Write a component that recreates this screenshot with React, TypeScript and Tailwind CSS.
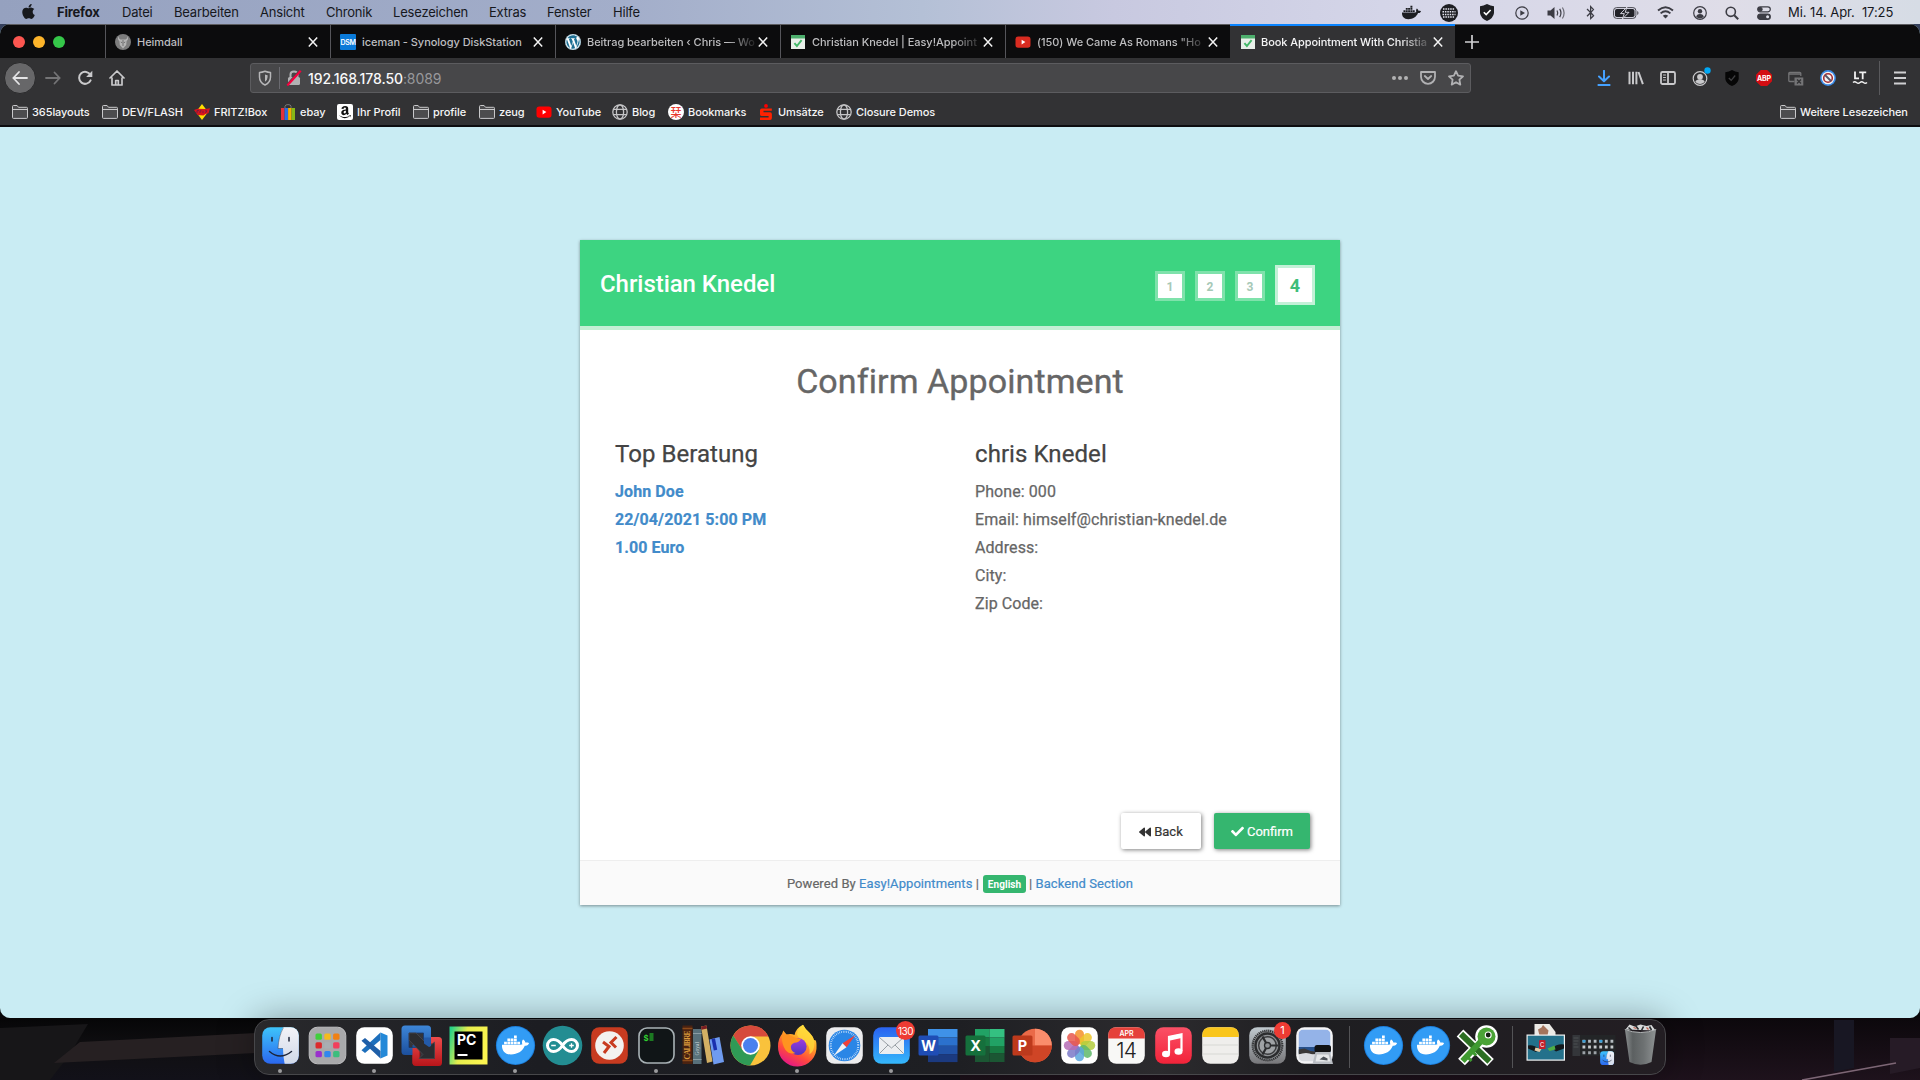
import React from "react";
import { FaApple, FaDocker, FaWordpress, FaAmazon, FaBluetoothB, FaCheck, FaBackward } from "react-icons/fa";

const UI = "font-['Inter','Liberation_Sans',sans-serif]";

/* ---------- small glyphs ---------- */

const Folder = () => (
  <svg width="16" height="16" viewBox="0 0 16 16" fill="none" stroke="#c8c8ca" strokeWidth="1">
    <path d="M.5 13.5v-11q0-1 1-1h3.6l1.4 1.8h8q1 0 1 1v9.2q0 .9-1 .9h-13q-1 0-1-.9z" fill="#4c4c4e" />
    <path d="M.8 5.5h14.4" />
  </svg>
);

const Globe = () => (
  <svg width="16" height="16" viewBox="0 0 16 16" fill="none" stroke="#c4c4c6" strokeWidth="1.3">
    <circle cx="8" cy="8" r="7.2" />
    <ellipse cx="8" cy="8" rx="3.6" ry="7.2" />
    <path d="M1.4 5.4h13.2M1.4 10.6h13.2" />
  </svg>
);

const YouTube = ({ color }: { color: string }) => (
  <svg width="16" height="16" viewBox="0 0 16 16">
    <rect x=".5" y="2.4" width="15" height="11.4" rx="2.8" fill={color} />
    <path d="M6.6 5.8v4.6l3.8-2.3z" fill="#fff" />
  </svg>
);

const Fritz = () => (
  <svg width="16" height="16" viewBox="0 0 16 16">
    <path d="M8 0l6 8-6 8-6-8z" fill="#ffe000" />
    <path d="M0 6l3.500-1.200 8 .2 4.500-.7-1.500 5-3 .7-2 1.500-6-.5-1-1.500z" fill="#d8141c" />
    <path d="M3 9V6.600h2M6 9V6.800h1.600M9 9V6.800M11 6.800h2L11.400 9" stroke="#6a1a48" strokeWidth=".9" fill="none" />
  </svg>
);

const Ebay = () => (
  <svg width="16" height="16" viewBox="0 0 16 16">
    <path d="M5 4V2.2Q5.2.6 8 .6t3 1.6V4" stroke="#777" fill="none" />
    <path d="M1 4h3.6v12H1z" fill="#e53238" />
    <path d="M4.6 4h3.5v12H4.6z" fill="#2a6fe0" />
    <path d="M8.1 4h3.5v12H8.1z" fill="#f5af02" />
    <path d="M11.6 4H15v12h-3.4z" fill="#86b817" />
  </svg>
);

const AmazonIcon = () => (
  <span className="flex size-4 items-center justify-center rounded-[2px] bg-white">
    <FaAmazon size={14} color="#111" />
  </span>
);

const JapanIcon = () => (
  <span className="flex size-4 items-center justify-center rounded-full bg-white font-['Noto_Sans_CJK_JP',sans-serif] text-[11px] leading-none text-[#e8372c]">栞</span>
);

const Sparkasse = () => (
  <svg width="16" height="16" viewBox="0 0 16 16">
    <circle cx="8" cy="1.9" r="1.9" fill="#f00" />
    <path d="M3.800 4.600h10v2.200H5.500v1.500H12q1.900 0 1.900 1.900v3.700q0 2-1.900 2H2v-2.300h8.600v-1.500H3.800Q2 12.100 2 10.200V6.400q0-1.800 1.800-1.800z" fill="#f20" />
  </svg>
);

const Heimdall = () => (
  <svg width="16" height="16" viewBox="0 0 16 16">
    <circle cx="8" cy="8" r="8" fill="#7d7d7d" />
    <path d="M4 2Q1.800 5 4.400 7l.4 4L8 14.500 11.200 11l.4-4Q14.200 5 12 2q.5 3-1.500 3.500h-5Q3.500 5 4 2z" fill="#b4b4b4" />
    <path d="M8 6v6M5.800 8l1.400.8M10.200 8l-1.400.8" stroke="#6a6a6a" strokeWidth=".9" />
  </svg>
);

const Dsm = () => (
  <span className="flex size-4 items-center justify-center rounded-[1px] bg-[#0a7ad8] text-[7px] leading-none font-semibold tracking-[-0.3px] text-white">DSM</span>
);

const WordPress = () => (
  <span className="flex size-4 items-center justify-center rounded-full bg-white">
    <FaWordpress size={16} color="#1d6f93" />
  </span>
);

const EasyAppt = () => (
  <svg width="16" height="16" viewBox="0 0 16 16">
    <path d="M1 1h14v14H1z" fill="#e8efe9" />
    <path d="M1 1h14v3.600H1z" fill="#4cae6c" />
    <path d="M4.400 9.200l2.500 2.800 4.700-5.800" stroke="#43b869" strokeWidth="1.900" fill="none" />
  </svg>
);

const Close = () => (
  <svg width="10" height="10" viewBox="0 0 10 10" className="shrink-0" stroke="#f2f2f2" strokeWidth="1.500">
    <path d="M.8.5l8.400 9M9.200.5l-8.400 9" />
  </svg>
);

/* ---------- macOS menu bar ---------- */

const menus: [string, string][] = [
  ["Datei", "w-[52px]"],
  ["Bearbeiten", "w-[86px]"],
  ["Ansicht", "w-[66px]"],
  ["Chronik", "w-[67px]"],
  ["Lesezeichen", "w-[96px]"],
  ["Extras", "w-[58px]"],
  ["Fenster", "w-[66px]"],
  ["Hilfe", "w-[40px]"],
];

function Slot({ w, children }: { w: string; children: React.ReactNode }) {
  return <span className={`flex h-full shrink-0 items-center justify-center ${w}`}>{children}</span>;
}

function MenuBar() {
  return (
    <div className="flex h-6 shrink-0 items-center bg-[linear-gradient(90deg,#95a1bf_0%,#a3aeca_33%,#b4c0d6_48%,#c8c9e0_58%,#d4d5e8_72%,#dfdde8_90%,#d6dce5_100%)] pt-px text-[13px] tracking-[-0.2px] text-[#16181d]">
      <span className="flex w-[57px] justify-center pb-[2px]">
        <FaApple size={17} color="#17191d" />
      </span>
      <span className="w-[65px] font-bold">Firefox</span>
      {menus.map(([label, w]) => (
        <span key={label} className={w}>
          {label}
        </span>
      ))}
      <div className="ml-auto flex h-full items-center">
        <Slot w="w-[38px]">
          <FaDocker size={19} color="#1d1e22" />
        </Slot>
        <Slot w="w-[38px]">
          <svg width="18" height="18" viewBox="0 0 18 18">
            <circle cx="9" cy="9" r="9" fill="#1d1e22" />
            <path d="M3 5h12M2.500 7.700h13M2.500 10.400h13M3 13.100h12" stroke="#e4e4ee" strokeWidth="1.500" strokeDasharray="1.500 .9" />
          </svg>
        </Slot>
        <Slot w="w-[37px]">
          <svg width="16" height="17" viewBox="0 0 16 17">
            <path d="M8 0q3.500 2 7 2.200V9q-.5 5-7 8Q1.500 14 1 9V2.200Q4.500 2 8 0z" fill="#1d1e22" />
            <path d="M4.800 8.200l2.400 2.400 4.400-4.600" stroke="#fff" strokeWidth="1.600" fill="none" />
          </svg>
        </Slot>
        <Slot w="w-[33px]">
          <svg width="14" height="14" viewBox="0 0 14 14">
            <circle cx="7" cy="7" r="6.200" stroke="#3c3c44" strokeWidth="1.200" fill="none" />
            <path d="M5.300 4.200v5.600L10 7z" fill="#3c3c44" />
          </svg>
        </Slot>
        <Slot w="w-[36px]">
          <svg width="19" height="14" viewBox="0 0 19 14" fill="none" stroke="#3c3c44" strokeWidth="1.200">
            <path d="M.5 4.600h3L7.500 1v12l-4-3.600h-3z" fill="#3c3c44" stroke="none" />
            <path d="M10 4.500q1.500 2.500 0 5M12.700 2.900q2.500 4.100 0 8.200" />
            <path d="M15.400 1.500q3.400 5.500 0 11" stroke="#6d6d76" />
          </svg>
        </Slot>
        <Slot w="w-[32px]">
          <FaBluetoothB size={15} color="#3c3c44" />
        </Slot>
        <Slot w="w-[40px]">
          <svg width="26" height="12" viewBox="0 0 26 12">
            <rect x=".6" y=".6" width="22.300" height="10.800" rx="3" fill="none" stroke="#4a4a52" />
            <rect x="2" y="2" width="19.500" height="8" rx="1.800" fill="#222228" />
            <path d="M24.200 4v4q1.300-.4 1.300-2t-1.300-2z" fill="#55555c" />
            <path d="M14 0L7.500 6.600h3.800L9.400 12 16 5.300h-3.800z" fill="#222228" stroke="#e0dfe9" strokeWidth=".9" />
          </svg>
        </Slot>
        <Slot w="w-[38px]">
          <svg width="17" height="13" viewBox="0 0 17 13" fill="none" stroke="#3c3c44" strokeWidth="1.900" className="ml-px">
            <path d="M1 4.500q7.500-6.600 15 0M3.600 7.400q4.900-4.200 9.800 0" />
            <path d="M8.500 12.500L5.800 9.800q2.700-2 5.400 0z" fill="#3c3c44" stroke="none" />
          </svg>
        </Slot>
        <Slot w="w-[32px]">
          <svg width="14" height="14" viewBox="0 0 14 14">
            <circle cx="7" cy="7" r="6.300" stroke="#3c3c44" strokeWidth="1.200" fill="none" />
            <circle cx="7" cy="5.200" r="2.200" fill="#3c3c44" />
            <path d="M3.200 11q.4-3 3.800-3t3.800 3q-3.800 2.800-7.600 0z" fill="#3c3c44" />
          </svg>
        </Slot>
        <Slot w="w-[32px]">
          <svg width="14" height="14" viewBox="0 0 14 14" fill="none" stroke="#3c3c44" strokeWidth="1.600">
            <circle cx="5.800" cy="5.800" r="4.600" />
            <path d="M9.200 9.200l4 4" strokeWidth="2" />
          </svg>
        </Slot>
        <Slot w="w-[32px]">
          <svg width="14" height="14" viewBox="0 0 14 14" fill="none" stroke="#3c3c44" strokeWidth="1.200">
            <rect x=".7" y=".8" width="12.600" height="5" rx="2.500" />
            <circle cx="3.300" cy="3.300" r="1.800" fill="#3c3c44" />
            <rect x=".7" y="8" width="12.600" height="5.400" rx="2.700" fill="#3c3c44" />
            <circle cx="10.600" cy="10.700" r="1.500" fill="#e0e0ea" stroke="none" />
          </svg>
        </Slot>
        <span className="ml-2 w-[132px] whitespace-pre tracking-[-0.08px]">{"Mi. 14. Apr.  17:25"}</span>
      </div>
    </div>
  );
}

/* ---------- browser chrome ---------- */

const tabs: { icon: React.ReactNode; title: string }[] = [
  { icon: <Heimdall />, title: "Heimdall" },
  { icon: <Dsm />, title: "iceman - Synology DiskStation" },
  { icon: <WordPress />, title: "Beitrag bearbeiten ‹ Chris — Wo" },
  { icon: <EasyAppt />, title: "Christian Knedel | Easy!Appoint" },
  { icon: <YouTube color="#d92b20" />, title: '(150) We Came As Romans "Ho' },
];

/* Titles that run up to the close button fade out at their right end. */
const FADE = "mask-[linear-gradient(90deg,#000_140px,transparent_172px)]";

function TabStrip() {
  return (
    <div className="flex h-[34px] shrink-0 border-t border-[#5d5d61] bg-[#0c0c0d]">
      <div className="flex w-[105px] shrink-0 items-center gap-2 pt-px pl-[13px]">
        <span className="size-3 rounded-full bg-[#fc5650]" />
        <span className="size-3 rounded-full bg-[#fdb42a]" />
        <span className="size-3 rounded-full bg-[#35c749]" />
      </div>
      {tabs.map((t, i) => (
        <div key={t.title} className="flex w-[225px] shrink-0 items-center border-l border-[#55555a] pt-px pr-[12px] pl-[9px]">
          <span className="shrink-0">{t.icon}</span>
          <span className={`mr-[1px] ml-[6px] w-[175px] text-[11px] font-medium tracking-[-0.04px] whitespace-nowrap text-[#bebec0] ${i > 1 ? FADE : ""}`}>
            {t.title}
          </span>
          <Close />
        </div>
      ))}
      <div className="-mt-px flex w-[225px] shrink-0 items-center border-t-2 border-[#0a84ff] bg-[#323234] pr-[12px] pl-[10px]">
        <span className="shrink-0">
          <EasyAppt />
        </span>
        <span className={`mr-[1px] ml-[5px] w-[175px] text-[11px] font-medium tracking-[-0.07px] whitespace-nowrap text-[#f5f5f6] ${FADE}`}>
          Book Appointment With Christia
        </span>
        <Close />
      </div>
      <div className="flex w-[34px] items-center justify-center">
        <svg width="14" height="14" viewBox="0 0 14 14" stroke="#d0d0d2" strokeWidth="1.700">
          <path d="M7 0v14M0 7h14" />
        </svg>
      </div>
    </div>
  );
}

const S = ({ children, c = "#c9c9cb", w = 1.8 }: { children: React.ReactNode; c?: string; w?: number }) => (
  <svg width="16" height="16" viewBox="0 0 16 16" fill="none" stroke={c} strokeWidth={w} strokeLinecap="round" strokeLinejoin="round">
    {children}
  </svg>
);

function NavBar() {
  return (
    <div className="flex h-10 shrink-0 items-center bg-[#323234] pl-1">
      <span className="flex size-8 items-center justify-center rounded-full border border-[#29292b] bg-[#676769]">
        <S c="#e4e4e6">
          <path d="M15 8H1.300M7 2L1.300 8 7 14" />
        </S>
      </span>
      <Slot w="w-[33px]">
        <S c="#747476">
          <path d="M1 8h13.700M9.500 2.500L14.700 8l-5.200 5.500" />
        </S>
      </Slot>
      <Slot w="w-[32px]">
        <S w={2}>
          <path d="M13.600 10.300A6 6 0 1 1 13.400 5" />
          <path d="M15.300.8v6.200H9.100z" fill="#c9c9cb" stroke="none" />
        </S>
      </Slot>
      <Slot w="w-[32px]">
        <S w={1.700}>
          <path d="M1 8l7-7 7 7M3 8v7h10V8M6.700 14.500v-4h2.600v4" />
        </S>
      </Slot>
      <div className="ml-[117px] flex h-[30px] w-[1221px] items-center rounded-[3px] border border-[#5c5c5f] bg-[#474749]">
        <Slot w="w-[28px]">
          <S c="#b6b6b8" w={1.500}>
            <path d="M8 1.300q3 1.200 5.500 1.200V7q0 5.500-5.500 8Q2.500 12.500 2.500 7V2.500Q5 2.500 8 1.300z" />
            <path d="M8 4.500q1.500.6 2.600.7V7q0 3-2.600 4.700z" fill="#b6b6b8" stroke="none" />
          </S>
        </Slot>
        <span className="h-[22px] w-px bg-[#6a6a70]" />
        <Slot w="w-[28px]">
          <svg width="16" height="16" viewBox="0 0 16 16" fill="none">
            <rect x="2" y="7" width="12" height="8" rx="1.500" fill="#b1b1b3" />
            <path d="M4.500 7V4.500q0-3 3.500-3t3.500 3V7" stroke="#b1b1b3" strokeWidth="2" />
            <path d="M1.500 14L13 1" stroke="#474749" strokeWidth="1.600" />
            <path d="M1.300 15.500L14.700.8" stroke="#f5003d" strokeWidth="2.200" />
          </svg>
        </Slot>
        <span className="pt-px text-[14px] font-medium tracking-[-0.1px] text-[#f9f9fa]">
          192.168.178.50<span className="font-normal text-[#98989b]">:8089</span>
        </span>
        <div className="ml-auto flex h-full">
          <Slot w="w-[28px]">
            <svg width="16" height="4" viewBox="0 0 16 4" fill="#b1b1b3">
              <circle cx="2" cy="2" r="2" />
              <circle cx="8" cy="2" r="2" />
              <circle cx="14" cy="2" r="2" />
            </svg>
          </Slot>
          <Slot w="w-[28px]">
            <S c="#b1b1b3">
              <path d="M1 2h14v4.800a7 7 0 0 1-14 0zM4.800 6L8 9l3.200-3" />
            </S>
          </Slot>
          <Slot w="w-[28px]">
            <S c="#b1b1b3">
              <path d="M8 1.200l2.100 4.500 4.900.6-3.600 3.400.9 4.900L8 12.200l-4.300 2.400.9-4.900L1 6.300l4.900-.6z" />
            </S>
          </Slot>
        </div>
      </div>
      <div className="ml-auto flex h-full items-center">
        <Slot w="w-[32px]">
          <S c="#45a1ff" w={2}>
            <path d="M8 .8v10M3 6.500l5 4.700 5-4.700M2.400 15h11.200" />
          </S>
        </Slot>
        <Slot w="w-[32px]">
          <S w={2}>
            <path d="M1.500 1.800v12.400M5 1.800v12.400M8.400 1.800v12.400M10.500 2l4.400 12.200" strokeLinecap="butt" />
          </S>
        </Slot>
        <Slot w="w-[32px]">
          <S>
            <rect x="1" y="2" width="14" height="12" rx="1.500" />
            <path d="M8 2v12" />
            <path d="M3.500 5h2M3.500 7.500h2M3.500 10h2" strokeWidth="1" />
          </S>
        </Slot>
        <Slot w="w-[32px]">
          <svg width="20" height="20" viewBox="0 0 20 20" className="-mt-0.5 ml-0.5" fill="none">
            <circle cx="9" cy="11.500" r="6.800" stroke="#c9c9cb" strokeWidth="1.200" />
            <circle cx="9" cy="9.800" r="2.900" fill="#c9c9cb" />
            <path d="M4.300 15q.8-2.700 4.700-2.700t4.700 2.700Q9 19 4.300 15z" fill="#c9c9cb" />
            <circle cx="16.500" cy="3.500" r="3.200" fill="#00a8f5" />
          </svg>
        </Slot>
        <Slot w="w-[32px]">
          <svg width="16" height="16" viewBox="0 0 16 16">
            <path d="M8 0q3 1.900 6.700 2.200V9Q14 13.500 8 16 2 13.500 1.300 9V2.200Q5 1.900 8 0z" fill="#060606" />
            <path d="M4.800 8l2.400 2.300 4-4.800" stroke="#3e3e40" strokeWidth="1.300" fill="none" />
          </svg>
        </Slot>
        <Slot w="w-[32px]">
          <span className="flex size-4 items-center justify-center bg-[#d40d12] [clip-path:polygon(30%_0,70%_0,100%_30%,100%_70%,70%_100%,30%_100%,0_70%,0_30%)]">
            <b className="text-[7px] leading-none tracking-[-0.2px] text-white">ABP</b>
          </span>
        </Slot>
        <Slot w="w-[32px]">
          <svg width="16" height="16" viewBox="0 0 16 16" fill="none" stroke="#747476" strokeWidth="1.300">
            <path d="M6.500 11.500H1.800q-1 0-1-1V3.300q0-1 1-1h10q1 0 1 1V6M1 4h11.500" />
            <rect x="6.500" y="7.500" width="8.800" height="8" fill="#747476" stroke="none" />
            <path d="M9 9.500l4 4M13 9.500l-4 4" stroke="#323234" />
          </svg>
        </Slot>
        <Slot w="w-[32px]">
          <svg width="16" height="16" viewBox="0 0 16 16" fill="none">
            <circle cx="8" cy="8" r="7.900" fill="#3b8be8" />
            <circle cx="8" cy="8" r="6.300" fill="#f4f4f4" />
            <circle cx="8" cy="8" r="4.300" stroke="#a52f35" strokeWidth="1.600" />
            <path d="M5 5l6 6" stroke="#55576a" strokeWidth="1.800" />
          </svg>
        </Slot>
        <Slot w="w-[32px]">
          <svg width="16" height="16" viewBox="0 0 16 16" fill="none" stroke="#f2f2f2" strokeWidth="1.800">
            <path d="M3 1.500v6.800h4M7.200 2.400h7M10.700 2.400v6.900" />
            <path d="M1 12.500q1.700-1.500 3.500 0t3.500 0 3.500 0 3.500 0" strokeWidth="1.500" />
          </svg>
        </Slot>
        <span className="ml-[3px] h-[34px] w-px bg-[#59595c]" />
        <Slot w="w-[40px]">
          <svg width="14" height="14" viewBox="0 0 14 14" stroke="#d0d0d2" strokeWidth="1.800">
            <path d="M1 1.500h12M1 7h12M1 12.500h12" />
          </svg>
        </Slot>
      </div>
    </div>
  );
}

const bookmarks: { icon: React.ReactNode; label: string; w: string }[] = [
  { icon: <Folder />, label: "365layouts", w: "w-[90px]" },
  { icon: <Folder />, label: "DEV/FLASH", w: "w-[92px]" },
  { icon: <Fritz />, label: "FRITZ!Box", w: "w-[86px]" },
  { icon: <Ebay />, label: "ebay", w: "w-[57px]" },
  { icon: <AmazonIcon />, label: "Ihr Profil", w: "w-[76px]" },
  { icon: <Folder />, label: "profile", w: "w-[66px]" },
  { icon: <Folder />, label: "zeug", w: "w-[57px]" },
  { icon: <YouTube color="#f00" />, label: "YouTube", w: "w-[76px]" },
  { icon: <Globe />, label: "Blog", w: "w-[56px]" },
  { icon: <JapanIcon />, label: "Bookmarks", w: "w-[90px]" },
  { icon: <Sparkasse />, label: "Umsätze", w: "w-[78px]" },
  { icon: <Globe />, label: "Closure Demos", w: "w-[110px]" },
];

function BookmarkBar() {
  return (
    <div className="flex h-[29px] shrink-0 items-center border-b-2 border-[#0d0d10] bg-[#323234] pt-px pl-3 text-[11px] font-medium tracking-[-0.08px] text-[#f5f5f6]">
      {bookmarks.map((b) => (
        <span key={b.label} className={`flex shrink-0 items-center gap-1 whitespace-nowrap ${b.w}`}>
          {b.icon}
          {b.label}
        </span>
      ))}
      <span className="ml-auto flex w-[140px] items-center gap-1 whitespace-nowrap">
        <Folder />
        Weitere Lesezeichen
      </span>
    </div>
  );
}

/* ---------- booking page ---------- */

function Step({ n }: { n: string }) {
  return (
    <span className="flex size-[30px] items-center justify-center border-3 border-[#7fe2ab] bg-white pt-px text-[12px] font-bold text-[#a6c8b6]">{n}</span>
  );
}

function BookingCard() {
  return (
    <div className="flex h-[665px] w-[760px] flex-col bg-white font-['Roboto',sans-serif] shadow-[0_1px_3px_rgba(0,0,0,0.4)]">
      <div className="flex h-[90px] shrink-0 items-center border-b-4 border-[#c3efd5] bg-[#3dd481] pr-[25px] pl-5">
        <span className="pt-[2px] text-[24px] font-medium tracking-[-0.05px] text-white">Christian Knedel</span>
        <div className="mt-1 ml-auto flex items-center gap-2.5">
          <div className="mt-[2px] flex gap-2.5">
            <Step n="1" />
            <Step n="2" />
            <Step n="3" />
          </div>
          <span className="flex size-10 items-center justify-center border-3 border-[#c3f1d7] bg-white text-[18px] font-bold text-[#3fbd79]">4</span>
        </div>
      </div>
      <h2 className="mt-[31px] text-center text-[34px] leading-[40px] tracking-[0.1px] text-[#666] [-webkit-text-stroke:0.35px_#666]">Confirm Appointment</h2>
      <div className="mt-[38px] flex pl-[35px]">
        <div className="w-[360px]">
          <h3 className="text-[24px] leading-[30px] tracking-[0.05px] text-[#444] [-webkit-text-stroke:0.25px_#444]">Top Beratung</h3>
          <div className="mt-[9px] text-[16px] leading-[28px] font-bold tracking-[0.09px] text-[#428bca] [-webkit-text-stroke:0.2px_#428bca]">
            <p>John Doe</p>
            <p>22/04/2021 5:00 PM</p>
            <p>1.00 Euro</p>
          </div>
        </div>
        <div>
          <h3 className="text-[24px] leading-[30px] tracking-[0.07px] text-[#444] [-webkit-text-stroke:0.25px_#444]">chris Knedel</h3>
          <div className="mt-[9px] text-[16px] leading-[28px] tracking-[0.08px] text-[#666] [-webkit-text-stroke:0.25px_#666]">
            <p>Phone: 000</p>
            <p>Email: himself@christian-knedel.de</p>
            <p>Address:</p>
            <p>City:</p>
            <p>Zip Code:</p>
          </div>
        </div>
      </div>
      <div className="mt-auto mb-[11px] flex justify-end gap-[13px] pr-[30px] text-[13px]">
        <button className="flex h-9 w-20 items-center justify-center gap-[3px] rounded-[2px] bg-white pt-px text-[#333] shadow-[1px_1px_4px_rgba(0,0,0,0.5)] [-webkit-text-stroke:0.2px_#333]">
          <FaBackward size={12} />
          Back
        </button>
        <button className="flex h-9 w-24 items-center justify-center gap-[3px] rounded-[2px] bg-[#35b66f] pt-px text-white shadow-[1px_1px_4px_rgba(0,0,0,0.5)] [-webkit-text-stroke:0.2px_#fff]">
          <FaCheck size={13} />
          Confirm
        </button>
      </div>
      <div className="flex h-[45px] shrink-0 items-center justify-center gap-1 border-t border-[#eee] bg-[#fafafa] pt-[2px] text-[13px] tracking-[0.07px] text-[#666]">
        <span className="[-webkit-text-stroke:0.2px_currentColor]">
          Powered By <span className="text-[#428bca]">Easy!Appointments</span> |
        </span>
        <span className="flex h-[18px] w-[43px] items-center justify-center rounded-[3px] bg-[#35b66f] pt-px text-[10px] font-bold text-white">English</span>
        <span className="-ml-px [-webkit-text-stroke:0.2px_currentColor]">
          | <span className="text-[#428bca]">Backend Section</span>
        </span>
      </div>
    </div>
  );
}

/* ---------- dock ---------- */

const D = ({ children }: { children: React.ReactNode }) => (
  <svg width="40" height="40" viewBox="-0.5 -0.5 40 40" className="overflow-visible">
    {children}
  </svg>
);

const Tile = ({ fill, stroke }: { fill: string; stroke?: string }) => (
  <rect x="1.700" y="1.700" width="36.600" height="36.600" rx="8.200" fill={fill} stroke={stroke} />
);

const Grad = ({ id, a, b, h }: { id: string; a: string; b: string; h?: boolean }) => (
  <linearGradient id={id} x1="0" y1="0" x2={h ? "1" : "0"} y2="1">
    <stop offset="0" stopColor={a} />
    <stop offset="1" stopColor={b} />
  </linearGradient>
);

const FinderFace = ({ id }: { id: string }) => (
  <>
    <defs>
      <Grad id={`${id}a`} a="#3ec8fb" b="#2a63ee" />
      <Grad id={`${id}b`} a="#f4f4f8" b="#cfd8e8" />
      <clipPath id={`${id}c`}>
        <rect x="1.700" y="1.700" width="36.600" height="36.600" rx="8.200" />
      </clipPath>
    </defs>
    <g clipPath={`url(#${id}c)`}>
      <path d="M0 0h40v40H0z" fill={`url(#${id}a)`} />
      <path d="M23.500 0Q18 10 17.500 23h5q0 9 2 17H40V0z" fill={`url(#${id}b)`} />
    </g>
    <path d="M11.500 12v3.500M28.500 12v3.500M9 26q10.500 9 22 0" stroke="#1c2438" strokeWidth="1.500" fill="none" strokeLinecap="round" />
    <path d="M23 2Q18 11 17.500 23h5" stroke="#1c2438" strokeWidth=".4" fill="none" />
  </>
);

const Finder = () => (
  <D>
    <FinderFace id="fnd" />
  </D>
);

const Launchpad = () => {
  const colors = ["#41cf3b", "#f5bb1d", "#f08013", "#dc2a2c", "#a9aeb2", "#f23f5c", "#9a30cc", "#3187ee", "#3cbd7d"];
  return (
    <D>
      <Tile fill="#a9a9ab" stroke="#bfbfc1" />
      {colors.map((c, i) => (
        <rect key={c} x={8 + (i % 3) * 8.8} y={8 + Math.floor(i / 3) * 8.8} width="6.400" height="6.200" rx="1.500" fill={c} />
      ))}
    </D>
  );
};

const VsCode = () => (
  <D>
    <Tile fill="#fff" />
    <path d="M26 7l7 3v20l-7 3z" fill="#2489d8" />
    <path d="M26 7v7.500L10.500 27.500 7 24.800z" fill="#1d6fbc" />
    <path d="M26 33v-7.500L10.500 12.500 7 15.200z" fill="#1f5fa8" />
  </D>
);

const VmWare = () => (
  <D>
    <defs>
      <Grad id="vmr" a="#ee4b4b" b="#b8151a" />
      <Grad id="vmb" a="#3d86d8" b="#1c4f9c" />
      <clipPath id="vmc">
        <path d="M0 22.500h22L40 40H0z" />
      </clipPath>
    </defs>
    <rect x="11" y="11.500" width="29.500" height="29" rx="3.500" fill="url(#vmr)" />
    <rect x="0" y="0" width="29.500" height="29.500" rx="3.500" fill="url(#vmb)" />
    <path d="M7.500 7.500H22v14.500H7.500z" fill="#33343a" stroke="#17386e" strokeWidth=".8" />
    <rect x="11" y="11.500" width="29.500" height="29" rx="3.500" fill="url(#vmr)" clipPath="url(#vmc)" />
    <path d="M18.500 21.500L26 18.500h7V33H18.500z" fill="#33343a" stroke="#6e1014" strokeWidth=".8" />
    <path d="M11 20l4.500-4.500 6.500 6.500H11z" fill="#1e529f" />
    <path d="M7.500 7.500h7L28 21l5-4.500V33H17.500l4-4L7.500 14.500z" fill="#2b2c30" stroke="#4b4c52" strokeWidth=".7" />
    <path d="M22.500 12v6l5 3.500 2-1V12z" fill="#235aa9" />
  </D>
);

const PyCharm = () => (
  <D>
    <defs>
      <linearGradient id="pyc" x1="0" y1=".2" x2="1" y2=".5">
        <stop offset="0" stopColor="#27d387" />
        <stop offset=".4" stopColor="#e6ed4d" />
        <stop offset="1" stopColor="#fcf550" />
      </linearGradient>
    </defs>
    <path d="M1 1h38v38H1z" fill="url(#pyc)" />
    <path d="M6 6h28v28H6z" fill="#000" />
    <text x="8.500" y="19.500" fill="#fff" fontFamily="Inter" fontWeight="700" fontSize="14">
      PC
    </text>
    <path d="M9 29.500h10" stroke="#fff" strokeWidth="2" />
  </D>
);

const Docker = () => (
  <D>
    <circle cx="20" cy="20" r="19.600" fill="#1c7fdc" />
    <circle cx="20" cy="20" r="18.600" fill="#329cf5" />
    <FaDocker x="6.500" y="6" size={27} color="#fff" />
  </D>
);

const Arduino = () => (
  <D>
    <circle cx="20" cy="20" r="19.800" fill="#238d92" />
    <path d="M20 20q-4-6-9-6a6 6 0 0 0 0 12q5 0 9-6 4-6 9-6a6 6 0 0 1 0 12q-5 0-9-6z" fill="none" stroke="#fff" strokeWidth="3" />
    <path d="M8.700 20h4.600M26.700 20h4.600M29 17.700v4.600" stroke="#fff" strokeWidth="1.300" />
  </D>
);

const RemoteDesktop = () => (
  <D>
    <Tile fill="#c83b20" />
    <circle cx="20" cy="20" r="14.300" fill="#f3f1ef" />
    <path d="M13.500 16.500l6 4.500-5 6.500M27 11.500l-5.500 5.500 5 5" stroke="#c83b20" strokeWidth="3" fill="none" />
  </D>
);

const Terminal = () => (
  <D>
    <rect x="2.500" y="2.500" width="35" height="35" rx="8" fill="#101517" stroke="#a9b2b6" strokeWidth="1.600" />
    <text x="7" y="15.500" fill="#31d631" fontFamily="Liberation Mono" fontWeight="700" fontSize="8.500">
      $
    </text>
    <path d="M13 7.500h4v8h-4z" fill="#1c7a22" />
  </D>
);

const Calibre = () => (
  <D>
    <path d="M-1 0h10v38.500H-1z" fill="#4a2210" />
    <path d="M-1 3h10M-1 35h10" stroke="#8a4a1a" strokeWidth="1.500" />
    <text x="0" y="0" transform="translate(6.300 34) rotate(-90)" fill="#d99a3c" fontFamily="Liberation Serif" fontWeight="700" fontSize="7.500" textLength="29">
      CALIBRE
    </text>
    <path d="M9.500 3.500h8.500v35H9.500z" fill="#58707a" />
    <path d="M9.500 8h8.500M9.500 34h8.500" stroke="#8a9ca3" />
    <text transform="translate(15.500 30) rotate(-90)" fill="#cfd8dc" fontFamily="Liberation Serif" fontSize="5.500">
      Goyal
    </text>
    <path d="M17.500 1l5.500-1 6 36-5.500 1.500z" fill="#d3b064" />
    <path d="M17.500 1l5.500-1 .6 3-5.600 1.200z" fill="#7a1d22" />
    <path d="M26 14l10-2.500 4.500 25L30 39z" fill="#6f9bf0" />
    <path d="M28 13.500l3.500-.8 2.200 11.500-3.400.8z" fill="#1a2fae" />
  </D>
);

const Chrome = () => (
  <D>
    <circle cx="20" cy="20" r="20" fill="#f9c23c" />
    <path d="M20 11h18A20 20 0 0 0 2.700 10l9 14.500z" fill="#d64a3c" />
    <path d="M2.700 10A20 20 0 0 0 19.500 40L28.500 24.500 20 29 12 24.500z" fill="#2f9a56" />
    <circle cx="20" cy="20" r="9.300" fill="#fff" />
    <circle cx="20" cy="20" r="7.500" fill="#4a80ee" />
  </D>
);

const Firefox = () => (
  <D>
    <defs>
      <linearGradient id="ffx" x1=".8" y1="0" x2=".3" y2="1">
        <stop offset="0" stopColor="#fff14a" />
        <stop offset=".4" stopColor="#ffa125" />
        <stop offset=".7" stopColor="#ff4a3c" />
        <stop offset="1" stopColor="#e3158a" />
      </linearGradient>
      <Grad id="ffp" a="#a33be0" b="#4f35c0" />
    </defs>
    <path d="M25.500-.8q2 4 6 7.500 4.500 4.500 5 8 2.500-1 2.500 5.300A19.300 19.300 0 1 1 .5 21Q.5 13 4.500 8.500L5.800 5 9 9q5-1 8 .5 1-6.500 8.500-10.300z" fill="url(#ffx)" />
    <path d="M25.500-.8q2 4 6 7.500 7 7 5 15-1 5-4.500 7 1-10-6-13-6-4-6.500-7 1-6 6-9.500z" fill="#ffd83a" opacity=".8" />
    <circle cx="20.500" cy="21" r="8.600" fill="url(#ffp)" />
    <path d="M4 10q6-2.500 13 2 3 .5 6.500 1.500-2 3.500-6.500 3.800-4.500 2-3.500 5.200.5 3.500 4.500 5-6 2-10-3-3.500-5-4-14.500z" fill="#ff9320" />
  </D>
);

const Safari = () => (
  <D>
    <Tile fill="#ececee" />
    <circle cx="20" cy="20" r="15.800" fill="#2a86e6" />
    <circle cx="20" cy="20" r="13.800" fill="none" stroke="#e6f2ff" strokeWidth="2" strokeDasharray=".6 1.200" />
    <path d="M31 9.500L18 17.700l4 4z" fill="#f0413a" />
    <path d="M9 30.500l9-12.800 4 4z" fill="#f2f2f4" />
  </D>
);

const Badge = ({ n, wide }: { n: string; wide?: boolean }) => (
  <span
    className={`absolute flex items-center justify-center rounded-full bg-[#ee3b33] leading-none text-white ${
      wide ? "-top-[4px] -right-[4px] size-[19px] text-[10px] tracking-[-0.5px]" : "-top-[3px] -right-[4px] size-[17px] text-[11px]"
    }`}
  >
    {n}
  </span>
);

const Mail = () => (
  <span className="relative">
    <D>
      <defs>
        <Grad id="mail" a="#2a62f0" b="#35b8fb" />
      </defs>
      <Tile fill="url(#mail)" />
      <rect x="7.500" y="11.500" width="25" height="17" rx="1.500" fill="#eceef0" />
      <path d="M8 12l12 10.500L32 12M8 28l8.500-8.500M32 28l-8.500-8.500" stroke="#8e959b" strokeWidth=".9" fill="none" />
    </D>
    <Badge n="130" wide />
  </span>
);

const Office = ({ letter, c }: { letter: string; c: string[] }) => (
  <D>
    {letter === "P" ? (
      <>
        <circle cx="22.500" cy="20" r="16.800" fill={c[1]} />
        <path d="M22.500 3.200A16.800 16.800 0 0 1 39.300 20H22.500z" fill={c[0]} />
        <path d="M5.700 20h33.600a16.800 16.800 0 0 1-33.600 0z" fill={c[2]} />
      </>
    ) : letter === "X" ? (
      <>
        <path d="M9.500 3.500H24V12H9.500z" fill="#21a265" />
        <path d="M24 3.500h15V12H24z" fill={c[0]} />
        <path d="M9.500 12H24v8.500H9.500z" fill="#177a42" />
        <path d="M24 12h15v8.500H24z" fill={c[1]} />
        <path d="M9.500 20.500H24v16H9.500z" fill={c[3]} />
        <path d="M24 20.500h15V28H24z" fill={c[2]} />
        <path d="M24 28h15v8.500H24z" fill={c[3]} />
      </>
    ) : (
      <>
        <path d="M9.500 3.500H39V12H9.500z" fill={c[0]} />
        <path d="M9.500 12H39v8.300H9.500z" fill={c[1]} />
        <path d="M9.500 20.300H39v8.300H9.500z" fill={c[2]} />
        <path d="M9.500 28.600H39v8H9.500z" fill={c[3]} />
      </>
    )}
    <rect x="0" y="10" width="20" height="20" rx="1.500" fill={c[4]} />
    <text x="10" y="25.200" textAnchor="middle" fill="#fff" fontFamily="Inter" fontWeight="700" fontSize="14.500">
      {letter}
    </text>
  </D>
);

const Photos = () => {
  const petals = ["#f5912a", "#edc52c", "#b3cc3d", "#5fb96a", "#5aa6dd", "#7a79c8", "#b56bb5", "#e8574c"];
  return (
    <D>
      <Tile fill="#fff" />
      {petals.map((c, i) => (
        <rect key={c} x="15.500" y="4.300" width="9" height="14.500" rx="4.500" fill={c} opacity=".85" transform={`rotate(${i * 45} 20 20)`} />
      ))}
    </D>
  );
};

const Calendar = () => (
  <D>
    <Tile fill="#f8f8f6" />
    <path d="M1.700 13V10q0-8.300 8.200-8.300h20.200q8.200 0 8.200 8.300v3z" fill="#e5413a" />
    <text x="20" y="10.500" textAnchor="middle" fill="#fff" fontFamily="Inter" fontWeight="600" fontSize="7">
      APR
    </text>
    <text x="19.700" y="32" textAnchor="middle" fill="#222" fontFamily="Inter" fontWeight="300" fontSize="21" letterSpacing="-.8">
      14
    </text>
  </D>
);

const Music = () => (
  <D>
    <defs>
      <Grad id="mus" a="#fb5066" b="#f22339" />
    </defs>
    <Tile fill="url(#mus)" />
    <path d="M15.500 28V11.500L28 8.800v16.700" stroke="#fff" strokeWidth="2.200" fill="none" />
    <path d="M15.500 11l12.500-2.800v4.300l-12.500 2.700z" fill="#fff" />
    <ellipse cx="12.500" cy="28.500" rx="4" ry="3.300" fill="#fff" />
    <ellipse cx="25" cy="26" rx="4" ry="3.300" fill="#fff" />
  </D>
);

const Notes = () => (
  <D>
    <Tile fill="#efeeec" />
    <path d="M1.700 11.500V10q0-8.300 8.200-8.300h20.200q8.200 0 8.200 8.300v1.500z" fill="#f9c51c" />
    <path d="M2 19.500h36M2 28.500h36" stroke="#cfcecb" strokeWidth=".7" />
  </D>
);

const Settings = () => (
  <span className="relative">
    <D>
      <defs>
        <Grad id="set" a="#c0c9cf" b="#77777a" />
      </defs>
      <Tile fill="url(#set)" />
      <circle cx="20" cy="20" r="14.800" fill="#8e9194" stroke="#2b2c2e" strokeWidth="2.200" strokeDasharray="1.200 .8" />
      <circle cx="20" cy="20" r="12" fill="none" stroke="#2b2c2e" strokeWidth="2.500" />
      <circle cx="20" cy="20" r="8.800" fill="#9fa2a5" stroke="#3a3b3d" strokeWidth="1.500" />
      <path d="M20 20L15 11M20 20h11M20 20l-5 9" stroke="#2b2c2e" strokeWidth="2.200" />
      <circle cx="20" cy="20" r="3" fill="#8e9194" stroke="#2b2c2e" strokeWidth="1.300" />
    </D>
    <Badge n="1" />
  </span>
);

const Preview = () => (
  <D>
    <Tile fill="#f4f4f6" />
    <clipPath id="pvw">
      <rect x="4" y="4" width="32" height="32" rx="5" />
    </clipPath>
    <g clipPath="url(#pvw)">
      <path d="M4 4h32v18H4z" fill="#94b3e8" />
      <path d="M4 21.500h32V28H4z" fill="#26508c" />
      <path d="M4 24l6-1 6 2.500 5 .5v3H4z" fill="#3a3838" />
      <path d="M4 29q8-3 14 0l18-1v8H4z" fill="#d9dbe0" />
    </g>
    <rect x="20" y="19.500" width="16.500" height="7.500" rx="2.500" fill="#111214" />
    <path d="M21 26.500h14.500l3 12H18z" fill="#b9bdc3" />
    <path d="M22.500 29h11.500l2 7H21z" fill="#e6e8ea" />
    <path d="M25 34l4-3 4 2v2z" fill="#4c5158" />
  </D>
);

const KeyCross = () => (
  <D>
    <g fill="none" stroke="#fff" strokeWidth="9.500">
      <path d="M2.500 7.500L33 37" />
      <path d="M4 36.500L27 13" />
    </g>
    <circle cx="29" cy="11" r="11.300" fill="#fff" />
    <path d="M3.500 8.500L32 36" stroke="#2c6e22" strokeWidth="6" />
    <path d="M5 35.500L27 12" stroke="#3f9a30" strokeWidth="6" />
    <path d="M10 31.500l4 4M15 26l3.500 4" stroke="#3f9a30" strokeWidth="3" />
    <circle cx="29" cy="11" r="9" fill="#4ba336" />
    <circle cx="30.700" cy="9.500" r="3.500" fill="#fff" />
    <circle cx="30.700" cy="9.500" r="2.400" fill="#14230f" />
  </D>
);

const MinWindow = () => (
  <D>
    <path d="M8-1.500h15l6 8v5H8z" fill="#eceae6" />
    <path d="M13 10l-1.500-6 3.500-2 1.500-2.500L19 2l3 3-1 5z" fill="#a5745c" />
    <rect x=".6" y="9.600" width="37.300" height="25" fill="#24718b" stroke="#f2f2f2" strokeWidth="1.200" />
    <path d="M1.500 20q6-1 11 3.500l-3 3-8-3.500zM37.500 19q-7-1-12 4l4 3 8-3z" fill="#14191c" />
    <path d="M9 22l6 1.500-2 3-5-1.500z" fill="#e5cba5" />
    <path d="M21 23l7-3 1 4-6 1.500z" fill="#4fae45" />
    <rect x="12.500" y="14.500" width="6.500" height="9" rx="1" fill="#c21f2b" />
    <text x="15.800" y="21.500" textAnchor="middle" fill="#fff" fontFamily="Inter" fontSize="6">
      C
    </text>
  </D>
);

const MinFinder = () => (
  <D>
    <rect x="-1" y="9.500" width="43" height="21" fill="#232527" />
    <rect x="-1" y="9.500" width="7.500" height="21" fill="#34363a" />
    <path d="M0 12.500h5M0 15.500h5M0 18.500h4M0 21.500h5" stroke="#5a5c60" strokeWidth=".7" />
    <g strokeWidth="3" strokeDasharray="2.800 2.800">
      <path d="M9 15.800h31" stroke="#b4babf" />
      <path d="M9 21.500h31" stroke="#c6cacd" />
      <path d="M9 27.200h17" stroke="#9ca2a7" />
    </g>
    <path d="M26 14.600h3v2.400h-3zM9 14.600h3v2.400H9z" fill="#3a9fd8" />
    <g transform="translate(26 25) scale(.38)">
      <FinderFace id="mf" />
    </g>
  </D>
);

const Trash = () => (
  <D>
    <defs>
      <linearGradient id="trs">
        <stop offset="0" stopColor="#8b8f90" />
        <stop offset=".25" stopColor="#5c6061" />
        <stop offset=".6" stopColor="#6d7172" />
        <stop offset="1" stopColor="#8e9293" />
      </linearGradient>
    </defs>
    <path d="M5 4L9-1l5 2 6-2 6 1.500 5-1L35 5z" fill="#d8dadb" />
    <path d="M8 2l3 2.500M15 0l3 4M23 1l-2 4M29 1l2 3.500" stroke="#2a2d30" strokeWidth="1.600" />
    <path d="M13 2l3 1M26 2l2 2" stroke="#c05a48" strokeWidth="1.200" />
    <path d="M4.500 4.500L9 36.500q11 5.500 22 0L35.500 4.500q-15.500 5-31 0z" fill="url(#trs)" />
    <path d="M4.300 4q15.700 6 31.400 0" fill="none" stroke="#b4b8b9" strokeWidth="1" />
  </D>
);

type DockItem = { key: string; icon: React.ReactNode; running?: boolean };

const apps: DockItem[] = [
  { key: "finder", icon: <Finder />, running: true },
  { key: "launchpad", icon: <Launchpad /> },
  { key: "code", icon: <VsCode />, running: true },
  { key: "vmware", icon: <VmWare /> },
  { key: "pycharm", icon: <PyCharm /> },
  { key: "docker", icon: <Docker />, running: true },
  { key: "arduino", icon: <Arduino /> },
  { key: "remote", icon: <RemoteDesktop /> },
  { key: "terminal", icon: <Terminal />, running: true },
  { key: "calibre", icon: <Calibre /> },
  { key: "chrome", icon: <Chrome /> },
  { key: "firefox", icon: <Firefox />, running: true },
  { key: "safari", icon: <Safari /> },
  { key: "mail", icon: <Mail />, running: true },
  { key: "word", icon: <Office letter="W" c={["#3f92e8", "#2b71cd", "#2153a8", "#1b3a80", "#1f4db5"]} /> },
  { key: "excel", icon: <Office letter="X" c={["#34c081", "#21a265", "#177a42", "#1b5633", "#15703c"]} /> },
  { key: "powerpoint", icon: <Office letter="P" c={["#fa8d6c", "#ea6a48", "#cf4526", "#cf4526", "#bd3a1c"]} /> },
  { key: "photos", icon: <Photos /> },
  { key: "calendar", icon: <Calendar /> },
  { key: "music", icon: <Music /> },
  { key: "notes", icon: <Notes /> },
  { key: "settings", icon: <Settings /> },
  { key: "preview", icon: <Preview /> },
];

const recent: DockItem[] = [
  { key: "docker-a", icon: <Docker /> },
  { key: "docker-b", icon: <Docker /> },
  { key: "keycross", icon: <KeyCross /> },
];

const stack: DockItem[] = [
  { key: "window-a", icon: <MinWindow /> },
  { key: "window-b", icon: <MinFinder /> },
  { key: "trash", icon: <Trash /> },
];

const DockGroup = ({ items }: { items: DockItem[] }) => (
  <>
    {items.map((i) => (
      <div key={i.key} className="flex h-full w-[47px] shrink-0 flex-col items-center pt-[5px]">
        {i.icon}
        {i.running && <span className="mt-[4px] size-1 rounded-full bg-[#9b9b9d]" />}
      </div>
    ))}
  </>
);

const Divider = () => (
  <div className="flex w-[22px] shrink-0 justify-center pt-[6px] pl-px">
    <span className="h-[42px] w-px bg-[#535356]" />
  </div>
);

function Dock() {
  return (
    <div className="relative z-10 flex h-[56px] w-[1412px] justify-center rounded-[15px] border border-[#47474a] bg-[linear-gradient(90deg,#29292c,#1c1d22_20%,#1e1f23_50%,#2c2b2e_64%,#1e1e21_75%,#231e23)] shadow-[0_0_36px_rgba(0,0,0,0.36)]">
      <DockGroup items={apps} />
      <Divider />
      <DockGroup items={recent} />
      <Divider />
      <DockGroup items={stack} />
    </div>
  );
}

/* Dark wallpaper that shows on both sides of the dock. */
const Wallpaper = () => (
  <svg className="absolute inset-0" width="1920" height="62" viewBox="0 0 1920 62">
    <defs>
      <linearGradient id="wpl" x1="0" x2="0" y1="0" y2="1">
        <stop offset="0" stopColor="#060607" />
        <stop offset=".5" stopColor="#100f12" />
        <stop offset="1" stopColor="#121119" />
      </linearGradient>
      <linearGradient id="wpr" x1="0" x2="0" y1="0" y2="1">
        <stop offset="0" stopColor="#0c080c" />
        <stop offset="1" stopColor="#1e121c" />
      </linearGradient>
    </defs>
    <path d="M0 0h960v62H0z" fill="url(#wpl)" />
    <path d="M960 0h960v62H960z" fill="url(#wpr)" />
    <path d="M0 10l88-4L70 36 50 62H0z" fill="#171618" />
    <path d="M80 24L256 15v20L54 45z" fill="#262022" />
    <path d="M1834 2h20v48l-20 4z" fill="#181723" />
    <path d="M1890 20h30v30l-30 6z" fill="#261b26" />
    <path d="M1802 62l94-17" stroke="#7d6675" strokeWidth="1.600" />
  </svg>
);

export default function App() {
  return (
    <div className={`flex h-[1080px] w-[1920px] flex-col overflow-hidden bg-[#0e0d11] ${UI}`}>
      <MenuBar />
      <div className="bg-[linear-gradient(#35405c_0,#35405c_30px,#08080a_60px)]">
        <div className="flex h-[994px] flex-col overflow-hidden rounded-[10px] bg-[#c9ecf3]">
          <TabStrip />
          <NavBar />
          <BookmarkBar />
          <div className="flex flex-1 items-start justify-center pt-[113px]">
            <BookingCard />
          </div>
        </div>
      </div>
      <div className="relative flex h-[62px] shrink-0 justify-center pt-px">
        <Wallpaper />
        <Dock />
      </div>
    </div>
  );
}
